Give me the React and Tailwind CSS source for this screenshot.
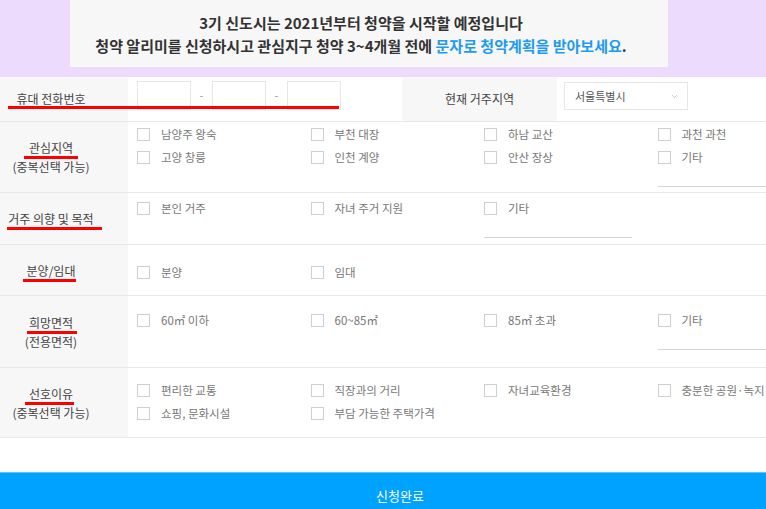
import { ChevronDown } from "lucide-react";

// 체크박스 한 줄 (네모 + 글자)
const Check = ({ label }) => (
  <div className="flex h-[23px] items-center">
    <span className="h-[13px] w-[13px] shrink-0 border border-[#cfcfcf] bg-white" />
    <span className="ml-[11px] whitespace-nowrap text-[11.5px] text-[#777]">{label}</span>
  </div>
);

// "기타" + 밑줄 입력칸
const Etc = () => (
  <div>
    <Check label="기타" />
    <div className="mt-[17px] w-[148px] border-b border-[#d6d6d6]" />
  </div>
);

// 왼쪽 회색 라벨 칸
const Label = ({ title, sub, line = "-left-[5px] -right-[5px]" }) => (
  <div className="flex w-[128px] shrink-0 flex-col items-center justify-center bg-[#f7f7f7] pr-[26px] text-[12px] leading-[19px] text-[#444]">
    <span className="relative inline-block">
      {title}
      <span className={`absolute bottom-[-2px] h-[3px] bg-[#ff0000] ${line}`} />
    </span>
    {sub && <span>{sub}</span>}
  </div>
);

const Row = ({ h, children }) => <div className={`flex border-b border-[#e8e8e8] ${h}`}>{children}</div>;

const Grid = ({ pt, children }) => <div className={`grid grid-cols-[repeat(4,173.5px)] content-start pl-[9px] ${pt}`}>{children}</div>;

export default function App() {
  return (
    <div className="h-[509px] w-[766px] overflow-hidden bg-white font-['Noto_Sans_CJK_KR',sans-serif]">
      <div className="w-[800px]">
        {/* 상단 안내 */}
        <div className="bg-[#ecdbfd] pb-[10px]">
          <div className="ml-[70px] flex h-[67px] w-[598px] flex-col items-center justify-center bg-[#f7f7f7] pr-[16px] text-[15px] font-bold leading-[23px] text-[#333]">
            <p>3기 신도시는 2021년부터 청약을 시작할 예정입니다</p>
            <p>
              청약 알리미를 신청하시고 관심지구 청약 3~4개월 전에 <span className="text-[#1e9bf0]">문자로 청약계획을 받아보세요</span>.
            </p>
          </div>
        </div>

        {/* 휴대 전화번호 / 현재 거주지역 */}
        <div className="relative flex h-[45px] border-b border-[#e8e8e8]">
          <div className="flex w-[128px] shrink-0 items-center justify-center bg-[#f7f7f7] pr-[26px] text-[12px] text-[#444]">휴대 전화번호</div>
          <div className="flex w-[274px] items-start pl-[9px] pt-[4px]">
            <div className="h-[29px] w-[54px] border border-[#e6e6e6]" />
            <span className="w-[21px] text-center text-[11px] leading-[29px] text-[#999]">-</span>
            <div className="h-[29px] w-[54px] border border-[#e6e6e6]" />
            <span className="w-[21px] text-center text-[11px] leading-[29px] text-[#999]">-</span>
            <div className="h-[29px] w-[54px] border border-[#e6e6e6]" />
          </div>
          <div className="flex w-[155px] items-center justify-center bg-[#f7f7f7] text-[12px] text-[#444]">현재 거주지역</div>
          <div className="pl-[7px] pt-[5px]">
            <div className="flex h-[28px] w-[124px] items-center justify-between border border-[#e6e6e6] pl-[10px] pr-[8px] text-[11px] text-[#555]">
              서울특별시
              <ChevronDown size={9} strokeWidth={1.5} className="text-[#999]" />
            </div>
          </div>
          <div className="absolute left-[8px] top-[29px] h-[3px] w-[331px] bg-[#ff0000]" />
        </div>

        {/* 관심지역 */}
        <Row h="h-[71px]">
          <Label title="관심지역" sub="(중복선택 가능)" />
          <Grid pt="pt-[1px]">
            <Check label="남양주 왕숙" />
            <Check label="부천 대장" />
            <Check label="하남 교산" />
            <Check label="과천 과천" />
            <Check label="고양 창릉" />
            <Check label="인천 계양" />
            <Check label="안산 장상" />
            <Etc />
          </Grid>
        </Row>

        {/* 거주 의향 및 목적 */}
        <Row h="h-[52px]">
          <Label title="거주 의향 및 목적" line="-left-[1px] -right-[8px]" />
          <Grid pt="pt-[4px]">
            <Check label="본인 거주" />
            <Check label="자녀 주거 지원" />
            <Etc />
          </Grid>
        </Row>

        {/* 분양/임대 */}
        <Row h="h-[51px]">
          <Label title="분양/임대" line="-left-[4px] -right-[1px]" />
          <Grid pt="pt-[16px]">
            <Check label="분양" />
            <Check label="임대" />
          </Grid>
        </Row>

        {/* 희망면적 */}
        <Row h="h-[72px]">
          <Label title="희망면적" sub="(전용면적)" line="-left-[2px] -right-[4px]" />
          <Grid pt="pt-[13px]">
            <Check label="60㎡ 이하" />
            <Check label="60~85㎡" />
            <Check label="85㎡ 초과" />
            <Etc />
          </Grid>
        </Row>

        {/* 선호이유 */}
        <Row h="h-[70px]">
          <Label title="선호이유" sub="(중복선택 가능)" line="-left-[4px] -right-[1px]" />
          <Grid pt="pt-[11px]">
            <Check label="편리한 교통" />
            <Check label="직장과의 거리" />
            <Check label="자녀교육환경" />
            <Check label="충분한 공원·녹지" />
            <Check label="쇼핑, 문화시설" />
            <Check label="부담 가능한 주택가격" />
          </Grid>
        </Row>

        {/* 신청 버튼 */}
        <div className="mt-[34px] flex h-[46px] items-center justify-center border-t border-[#5cc3ff] bg-[#00a2ff] text-[13px] text-white">신청완료</div>
      </div>
    </div>
  );
}
